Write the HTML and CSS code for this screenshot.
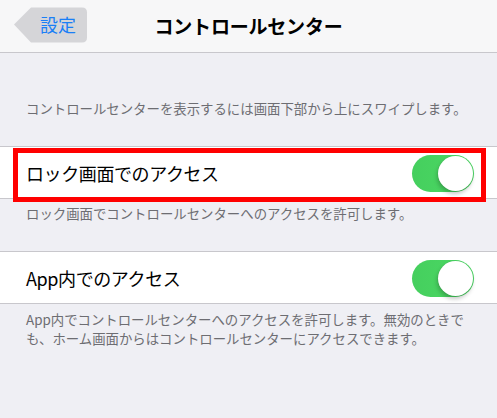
FILE: index.html
```html
<!DOCTYPE html>
<html lang="ja">
<head>
<meta charset="utf-8">
<link rel="stylesheet" href="styles.css">
</head>
<body>
<header class="navbar">
  <div class="back">
    <svg class="back-shape" width="74" height="36" viewBox="0 0 74 36">
      <path d="M0 17.5 L17 0.5 L68 0.5 Q73 0.5 73 5.5 L73 30.5 Q73 35.5 68 35.5 L17 35.5 Z" fill="#d5d5d8"/>
    </svg>
    <span class="back-label">設定</span>
  </div>
  <h1 class="title">コントロールセンター</h1>
</header>
<main class="content">
  <p class="note note-top">コントロールセンターを表示するには画面下部から上にスワイプします。</p>
  <div class="group">
    <div class="row">
      <span class="row-label">ロック画面でのアクセス</span>
      <span class="switch"><span class="knob"></span></span>
      <div class="highlight"></div>
    </div>
  </div>
  <p class="note note-mid">ロック画面でコントロールセンターへのアクセスを許可します。</p>
  <div class="group">
    <div class="row">
      <span class="row-label">App内でのアクセス</span>
      <span class="switch"><span class="knob"></span></span>
    </div>
  </div>
  <p class="note note-bottom">App内でコントロールセンターへのアクセスを許可します。無効のときでも、ホーム画面からはコントロールセンターにアクセスできます。</p>
</main>
</body>
</html>
```
FILE: styles.css
```css
* { box-sizing: border-box; }
html, body {
  margin: 0;
  padding: 0;
  background: #efeff4;
  font-family: "Noto Sans CJK JP", "Noto Sans", sans-serif;
  width: 497px;
  height: 418px;
  overflow: hidden;
}
.navbar {
  height: 53px;
  background: #f7f7f8;
  border-bottom: 1px solid #c8c7cc;
  display: flex;
  align-items: center;
  justify-content: center;
  position: relative;
}
.back {
  position: absolute;
  left: 14px;
  top: 7px;
  width: 74px;
  height: 36px;
}
.back-shape { display: block; }
.back-label {
  position: absolute;
  left: 26px;
  top: 0;
  line-height: 35px;
  font-size: 18px;
  color: #1a7ff6;
}
.title {
  margin: 0 0 2px 0;
  font-size: 19px;
  font-weight: bold;
  color: #000;
  letter-spacing: -0.2px;
}
.content { display: flex; flex-direction: column; }
.note {
  margin: 0;
  padding: 0 14px 0 26px;
  font-size: 13.4px;
  color: #6d6d72;
  line-height: 20px;
}
.note-top { padding-top: 45px; padding-bottom: 28px; }
.note-mid { padding-top: 4px; padding-bottom: 28px; }
.note-bottom { padding-top: 6px; line-height: 19px; }
.group {
  background: #fff;
  border-top: 1px solid #c8c7cc;
  border-bottom: 1px solid #c8c7cc;
}
.row {
  position: relative;
  height: 51px;
  display: flex;
  align-items: center;
  justify-content: space-between;
  padding: 0 23px 0 26px;
}
.row-label {
  font-size: 18px;
  color: #000;
  letter-spacing: -0.4px;
}
.switch {
  position: relative;
  width: 62px;
  height: 37px;
  border-radius: 19px;
  background: linear-gradient(to right, #45cf5e, #4cd964);
  margin-top: 1px;
}
.knob {
  position: absolute;
  right: 1px;
  top: 1px;
  width: 35px;
  height: 35px;
  border-radius: 50%;
  background: #fff;
  box-shadow: -1px 3px 4px rgba(0,0,0,0.22), 0 0 0 0.5px rgba(0,0,0,0.06);
}
.highlight {
  position: absolute;
  left: 13px;
  top: 1px;
  width: 473px;
  height: 54px;
  border: 5px solid #ff0000;
}
```
